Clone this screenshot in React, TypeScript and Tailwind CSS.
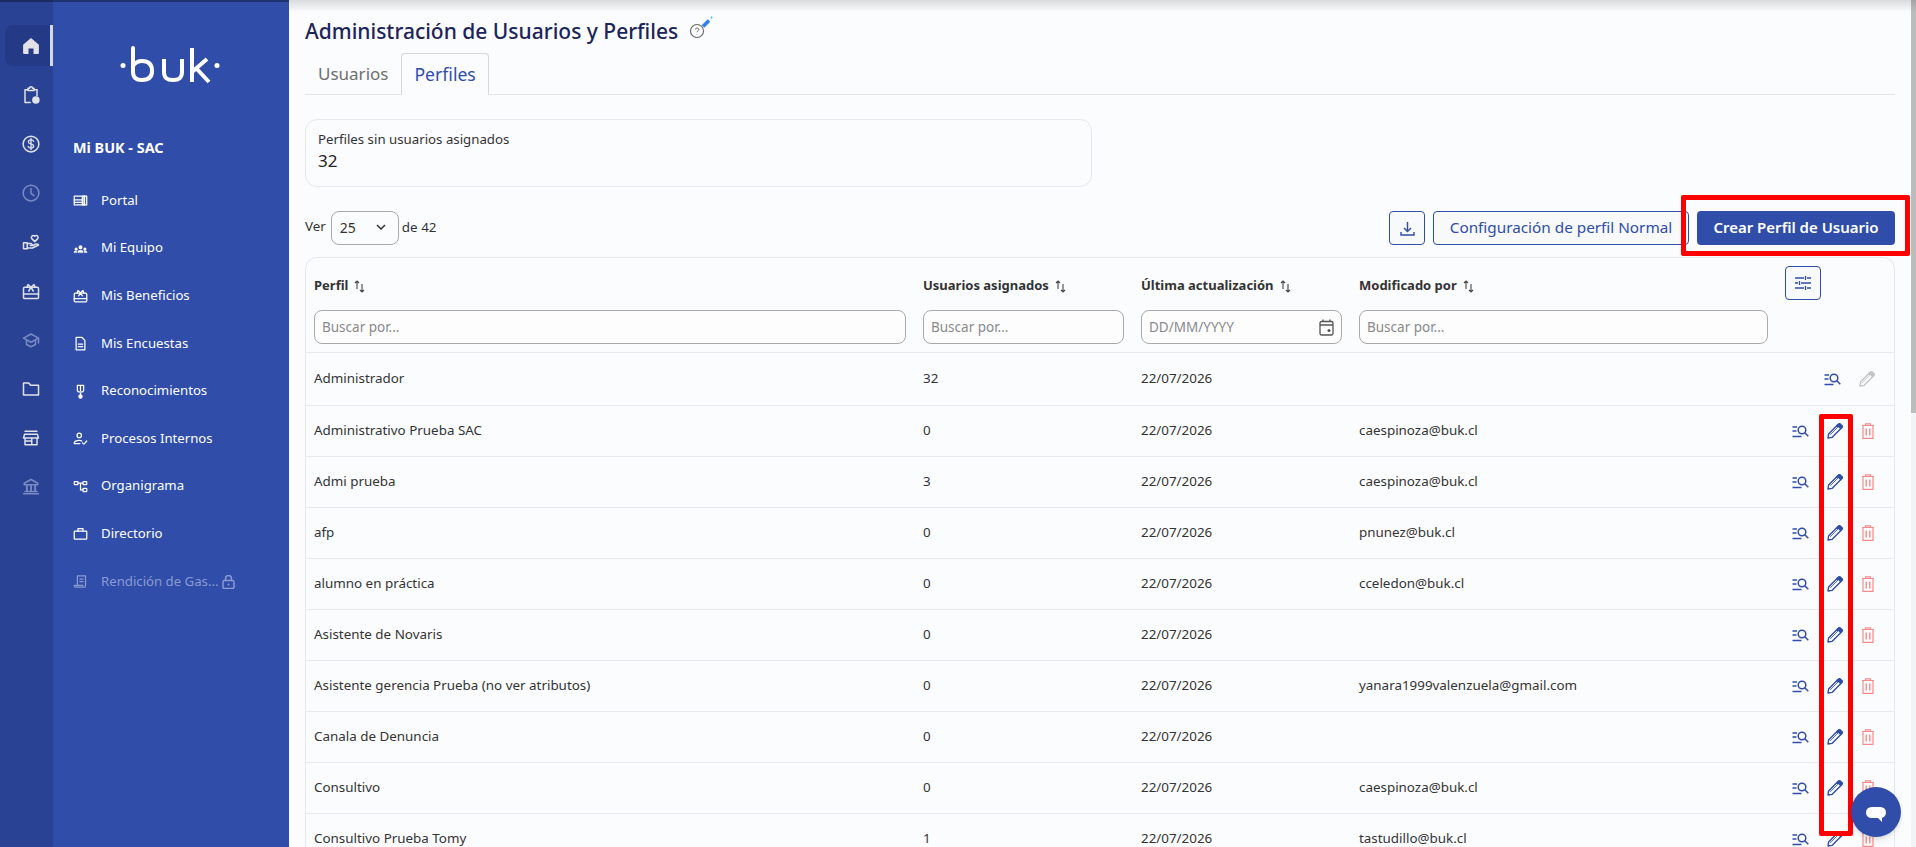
import type { ReactNode } from "react";

/* ---------------------------- Types and data ---------------------------- */

interface ProfileRow {
  name: string;
  users: number;
  updated: string;
  modifiedBy: string;
  locked?: boolean;
}

const ROWS: ProfileRow[] = [
  { name: "Administrador", users: 32, updated: "22/07/2026", modifiedBy: "", locked: true },
  { name: "Administrativo Prueba SAC", users: 0, updated: "22/07/2026", modifiedBy: "caespinoza@buk.cl" },
  { name: "Admi prueba", users: 3, updated: "22/07/2026", modifiedBy: "caespinoza@buk.cl" },
  { name: "afp", users: 0, updated: "22/07/2026", modifiedBy: "pnunez@buk.cl" },
  { name: "alumno en práctica", users: 0, updated: "22/07/2026", modifiedBy: "cceledon@buk.cl" },
  { name: "Asistente de Novaris", users: 0, updated: "22/07/2026", modifiedBy: "" },
  { name: "Asistente gerencia Prueba (no ver atributos)", users: 0, updated: "22/07/2026", modifiedBy: "yanara1999valenzuela@gmail.com" },
  { name: "Canala de Denuncia", users: 0, updated: "22/07/2026", modifiedBy: "" },
  { name: "Consultivo", users: 0, updated: "22/07/2026", modifiedBy: "caespinoza@buk.cl" },
  { name: "Consultivo Prueba Tomy", users: 1, updated: "22/07/2026", modifiedBy: "tastudillo@buk.cl" },
];

const GRID = "grid grid-cols-[592px_201px_201px_409px_1fr] gap-x-[17px] px-[8px]";

/* ------------------------------- Icons ---------------------------------- */

function Svg({ size = 20, className, children }: { size?: number; className?: string; children: ReactNode }) {
  return (
    <svg
      width={size}
      height={size}
      viewBox="0 0 24 24"
      fill="none"
      stroke="currentColor"
      strokeWidth={2}
      strokeLinecap="round"
      strokeLinejoin="round"
      className={className}
    >
      {children}
    </svg>
  );
}

const railIcons: { icon: ReactNode; dim?: boolean }[] = [
  {
    icon: (
      <path
        d="M12 2.500 3.200 9.800c-.5.4-.7.9-.7 1.500V20c0 .8.700 1.500 1.500 1.500h5V15h6v6.500h5c.8 0 1.500-.7 1.500-1.500v-8.700c0-.6-.2-1.100-.7-1.500Z"
        fill="currentColor"
        stroke="none"
      />
    ),
  },
  {
    icon: (
      <>
        <path d="M11 22H4V5h4M16 5h4v8" />
        <path d="M8 6V3h2a2 2 0 0 1 4 0h2v3Z" />
        <circle cx="18.500" cy="18.500" r="5" fill="currentColor" stroke="none" />
      </>
    ),
  },
  {
    icon: (
      <>
        <circle cx="12" cy="12" r="10.500" />
        <path d="M15.500 8.500C15 7 13.500 6.500 12 6.500c-2 0-3.500 1-3.500 2.700 0 3.600 7 1.800 7 5.500 0 1.800-1.500 2.800-3.500 2.800-1.700 0-3.200-.7-3.700-2.200M12 4.500v15" strokeWidth={1.800} />
      </>
    ),
  },
  {
    dim: true,
    icon: (
      <>
        <circle cx="12" cy="12" r="10.500" />
        <path d="M12 6v6.500l4 3" />
      </>
    ),
  },
  {
    icon: (
      <>
        <path d="M17 11.500 13 7.500c-1.700-2.200.8-5.500 4-3.200 3.200-2.300 5.700 1 4 3.200Z" />
        <path d="M2 13h5v8H2ZM7 14h5l3 2.500H11M7 20h7l8-4c-1-1.500-2.500-1.500-4-1l-3 1.500" />
      </>
    ),
  },
  {
    icon: (
      <>
        <rect x="2" y="7" width="20" height="15" rx="1.500" />
        <path d="M2 16h20M12 7 8 3.500 6.500 7M12 7l4-3.500L17.500 7M9 12l3-5 3 5" />
      </>
    ),
  },
  {
    dim: true,
    icon: (
      <>
        <path d="M12 4 2 9.500 12 15l10-5.500Z" />
        <path d="M6 12.500V18l6 3 6-3v-5.500M22 9.500V16" />
      </>
    ),
  },
  { icon: <path d="M2 20V4h7l2.500 3H22v13Z" /> },
  {
    icon: <path d="M4 3h16M3.500 7h17L22 12H2ZM4 12v9h16v-9M4 16h9v5M13 12v4" />,
  },
  {
    dim: true,
    icon: (
      <>
        <path d="M12 2 3 7v2h18V7ZM2 21h20M4 18h16" />
        <path d="M6.500 10.500v6M12 10.500v6M17.500 10.500v6" strokeWidth={2.500} />
      </>
    ),
  },
];

const menuItems: { label: string; icon: ReactNode; locked?: boolean }[] = [
  {
    label: "Portal",
    icon: (
      <>
        <rect x="2" y="5" width="20" height="14" />
        <path d="M2 11h13M2 15h13M15 5v14" />
        <path d="M18 5v14" strokeWidth={3} />
      </>
    ),
  },
  {
    label: "Mi Equipo",
    icon: (
      <>
        <circle cx="12" cy="10" r="2.200" fill="currentColor" />
        <circle cx="5" cy="13" r="1.500" fill="currentColor" />
        <circle cx="19" cy="13" r="1.500" fill="currentColor" />
        <path d="M8 18v-1c0-3 8-3 8 0v1ZM1.500 18c0-2 4-2.500 4.500-1v1ZM22.500 18c0-2-4-2.500-4.500-1v1Z" fill="currentColor" strokeWidth={1} />
      </>
    ),
  },
  {
    label: "Mis Beneficios",
    icon: (
      <>
        <rect x="2" y="8" width="20" height="14" rx="1.500" />
        <path d="M2 17h20M12 8 8 4 6.500 8M12 8l4-4 1.500 4M9 12.500 12 8l3 4.500" />
      </>
    ),
  },
  {
    label: "Mis Encuestas",
    icon: (
      <>
        <path d="M5 2h9l5 5v15H5Z" />
        <path d="M8.500 13h7M8.500 17h7" />
      </>
    ),
  },
  {
    label: "Reconocimientos",
    icon: (
      <>
        <path d="M7 2h10v8c0 4-10 4-10 0Z" />
        <path d="M12 3v8" />
        <path d="M12 15v2" />
        <circle cx="12" cy="20" r="2.500" fill="currentColor" />
      </>
    ),
  },
  {
    label: "Procesos Internos",
    icon: (
      <>
        <circle cx="10" cy="7" r="3.500" />
        <path d="M2 20v-1c0-4 9-5 12-3M2 20h9M15 19l2.500 2L22 16" />
      </>
    ),
  },
  {
    label: "Organigrama",
    icon: (
      <>
        <rect x="2" y="4" width="6" height="5" rx="1" />
        <rect x="16" y="4" width="6" height="5" rx="1" />
        <rect x="16" y="15" width="6" height="5" rx="1" />
        <path d="M8 6.500h8M12 6.500v11h4" />
      </>
    ),
  },
  {
    label: "Directorio",
    icon: (
      <>
        <rect x="2" y="8" width="20" height="13" rx="1" />
        <path d="M8 8V4h8v4" />
      </>
    ),
  },
  {
    label: "Rendición de Gas...",
    locked: true,
    icon: (
      <>
        <path d="M7 18V3h13v15c0 2-1 3-2 3H4c-1.500 0-2-1.500-2-3h14" />
        <path d="M11 8h5M11 12h5" />
      </>
    ),
  },
];

function SortIcon() {
  return (
    <svg width="11" height="13" viewBox="0 0 11 13" fill="none" stroke="#444" strokeWidth="1.100" className="ml-[6px]">
      <path d="M3 9V1M1 3l2-2 2 2" />
      <path d="M8 4v8M6 10l2 2 2-2" />
    </svg>
  );
}

function ViewIcon() {
  return (
    <svg width="17" height="14" viewBox="0 0 17 14" fill="none" stroke="#2f4da9" strokeWidth="1.300">
      <path d="M0.500 3h4.500M0.500 7h4M0.500 12.500h9" />
      <circle cx="10" cy="6" r="3.800" strokeWidth="1.500" />
      <path d="m12.800 8.800 3.500 3.500" strokeWidth="1.500" />
    </svg>
  );
}

function PencilIcon({ disabled }: { disabled?: boolean }) {
  const color = disabled ? "#c4c4c4" : "#2f4da9";
  return (
    <svg width="16" height="16" viewBox="0 0 16 16" fill="none" stroke={color} strokeWidth="1.400">
      <path d="M1 15 1.600 11 10.500 2.100l3.400 3.400L5 14.400Z" strokeLinejoin="round" />
      <path d="m10.500 2.100 1.200-1.200c.5-.5 1-.5 1.500 0l1.900 1.900c.5.500.5 1 0 1.500l-1.200 1.200Z" fill={color} />
      <path d="M3.200 11.800 11.800 3.200" strokeWidth="0.800" />
    </svg>
  );
}

function TrashIcon() {
  return (
    <svg width="14" height="16" viewBox="0 0 14 16" fill="none" stroke="#f98a8a" strokeWidth="1.200">
      <path d="M1 2.500h12M4.500 2.500V.8h5v1.700" />
      <path d="M2 2.500h10V15.300H2Z" />
      <path d="M5.200 5.500v7M8.800 5.500v7" strokeWidth="1.400" />
    </svg>
  );
}

function BukLogo() {
  return (
    <svg width="100" height="38" viewBox="0 0 100 38" fill="none" stroke="white" strokeWidth="4" strokeLinecap="round">
      <circle cx="3" cy="19.500" r="2.500" fill="white" stroke="none" />
      <circle cx="97" cy="19.500" r="2.500" fill="white" stroke="none" />
      <path d="M13 2v24c0 6 4 8 9 8s10-2 10-9-4-10-10-10c-4 0-7 2-9 5" />
      <path d="M44 13v13c0 6 3 8 9 8s9-2 9-8V13" strokeLinecap="butt" />
      <path d="M72 2v34M72 26 87 13M76 22l13 14" strokeLinecap="butt" />
    </svg>
  );
}

/* ------------------------------ Sidebars -------------------------------- */

function Rail() {
  return (
    <div className="flex w-[53px] shrink-0 flex-col items-end bg-[#2a4294] pt-[25px]">
      {railIcons.map((item, i) => (
        <div
          key={i}
          className={
            i === 0
              ? "mb-[8px] flex h-[41px] w-[48px] items-center justify-center rounded-l-lg border-r-[3px] border-[#d6d9e0] bg-[#253a86] pl-[6px] text-[#e0e2e8]"
              : `mb-[8px] flex h-[41px] w-[53px] items-center justify-center pl-[9px] ${item.dim ? "text-[#7a8bc4]" : "text-[#e0e2e8]"}`
          }
        >
          <Svg size={i === 0 ? 20 : 18}>{item.icon}</Svg>
        </div>
      ))}
    </div>
  );
}

function Sidebar() {
  return (
    <div className="flex w-[236px] shrink-0 flex-col bg-[#2f4da9] text-white">
      <div className="ml-[67px] mt-[46px]">
        <BukLogo />
      </div>
      <div className="ml-[20px] mt-[54px] text-[14.400px] font-bold leading-[20px]">Mi BUK - SAC</div>
      <nav className="mt-[19px] flex flex-col">
        {menuItems.map((item) => (
          <div
            key={item.label}
            className={`flex h-[47.600px] items-center pl-[20px] text-[13.200px] ${item.locked ? "text-[#8b9bd0]" : "text-white"}`}
          >
            <span className="flex w-[28px] shrink-0">
              <Svg size={15}>{item.icon}</Svg>
            </span>
            <span>{item.label}</span>
            {item.locked && (
              <svg width="13" height="14" viewBox="0 0 13 14" fill="none" stroke="currentColor" strokeWidth="1.500" className="ml-[3px]">
                <rect x="1" y="5.500" width="11" height="8" rx="1.500" />
                <path d="M3.500 5.500V3.500a3 3 0 0 1 6 0v2" />
                <circle cx="6.500" cy="9.500" r="1" fill="currentColor" stroke="none" />
              </svg>
            )}
          </div>
        ))}
      </nav>
    </div>
  );
}

/* -------------------------------- Table --------------------------------- */

function SearchInput({ placeholder, icon }: { placeholder: string; icon?: ReactNode }) {
  return (
    <div className="flex h-[34px] items-center justify-between rounded-lg border border-[#a9a9a9] bg-[#fdfdfe] px-[7px] text-[13.500px] text-[#8a8a8a]">
      <span>{placeholder}</span>
      {icon}
    </div>
  );
}

function ProfileTable() {
  const headers = ["Perfil", "Usuarios asignados", "Última actualización", "Modificado por"];
  return (
    <div className="rounded-t-xl border border-b-0 border-[#e6e8eb]">
      <div className={`${GRID} relative h-[95px] border-b border-[#e6e8eb]`}>
        {headers.map((h, i) => (
          <div key={h} className="flex flex-col">
            <div className="mt-[18px] flex h-[20px] items-center text-[13px] font-bold text-[#333]">
              {h}
              <SortIcon />
            </div>
            <div className="mt-[14px]">
              <SearchInput
                placeholder={i === 2 ? "DD/MM/YYYY" : "Buscar por..."}
                icon={
                  i === 2 ? (
                    <svg width="15" height="17" viewBox="0 0 15 17" fill="none" stroke="#555" strokeWidth="1.300">
                      <rect x="1" y="2.500" width="13" height="13.500" rx="1.500" />
                      <path d="M1 6h13M4 .5v2M11 .5v2" />
                      <circle cx="10" cy="11.500" r="1.500" fill="#555" stroke="none" />
                    </svg>
                  ) : undefined
                }
              />
            </div>
          </div>
        ))}
        <div className="flex justify-end pr-[68px] pt-[8px]">
          <button
            type="button"
            className="flex h-[34px] w-[36px] items-center justify-center rounded-[4px] border border-[#2f4da9] bg-[#f8f9fb] text-[#2f4da9]"
          >
            <svg width="16" height="14" viewBox="0 0 16 14" fill="none" stroke="currentColor" strokeWidth="1.300">
              <path d="M0 2h9M12 2h4M10.500 0v4M0 7h3M6 7h10M4.500 5v4M0 12h9M12 12h4M10.500 10v4" />
            </svg>
          </button>
        </div>
      </div>
      {ROWS.map((row, i) => (
        <div
          key={row.name}
          className={`${GRID} items-center border-b border-[#e6e8eb] pb-[2px] text-[13.400px] text-[#333] ${i === 0 ? "h-[53px]" : "h-[51px]"}`}
        >
          <div>{row.name}</div>
          <div>{row.users}</div>
          <div>{row.updated}</div>
          <div>{row.modifiedBy}</div>
          <div className="mt-[2px] flex items-center justify-end gap-[18px] pr-[11px]">
            <ViewIcon />
            <PencilIcon disabled={row.locked} />
            {!row.locked && <TrashIcon />}
          </div>
        </div>
      ))}
    </div>
  );
}

/* --------------------------------- App ---------------------------------- */

export default function App() {
  return (
    <div className="flex h-screen overflow-hidden bg-[#fbfcfe] font-['Noto_Sans',sans-serif]">
      <Rail />
      <Sidebar />
      <main className="relative flex-1 overflow-hidden pl-[16px] pr-[21px]">
        <div className="flex h-[53px] items-start pt-[16px]">
          <h1 className="text-[21px] font-medium leading-[30px] text-[#1b2559]">
            Administración de Usuarios y Perfiles
          </h1>
          <svg width="24" height="24" viewBox="0 0 24 24" fill="none" className="ml-[11px]">
            <circle cx="8" cy="15" r="6.500" stroke="#666" strokeWidth="1.100" />
            <path d="M6.300 13.500c.2-2 3.500-2 3.500 0 0 1.300-1.800 1.300-1.800 2.800M8 18v.4" stroke="#666" strokeWidth="1" />
            <path d="m14 10.500 6-6" stroke="#2f7fe8" strokeWidth="3.500" />
            <circle cx="22.500" cy="1.500" r="1" fill="#2fb8e8" />
          </svg>
        </div>

        <div className="flex h-[42px] border-b border-[#e3e5e8] text-[17px]">
          <div className="flex items-center px-[13px] text-[#6f6f6f]">Usuarios</div>
          <div className="flex h-[42px] items-center rounded-t-[4px] border border-[#d5d7da] border-b-[#fbfcfe] px-[12px] text-[17.600px] text-[#2f4da9]">
            Perfiles
          </div>
        </div>

        <div className="mt-[24px] h-[68px] w-[787px] rounded-xl border border-[#e6e8eb] px-[12px] pt-[9px]">
          <div className="text-[13.250px] leading-[20px] text-[#333]">Perfiles sin usuarios asignados</div>
          <div className="mt-[1px] text-[17px] leading-[22px] text-[#222]">32</div>
        </div>

        <div className="mt-[24px] flex h-[34px] items-center text-[13.400px] text-[#333]">
          <span className="pb-[3px]">Ver</span>
          <div className="ml-[5px] mr-[3px] flex h-[34px] w-[68px] items-center justify-between rounded-lg border border-[#a9a9a9] pb-[2px] pl-[8px] pr-[12px] text-[14px]">
            25
            <svg width="10" height="6" viewBox="0 0 10 6" fill="none" stroke="#333" strokeWidth="1.500">
              <path d="m1 1 4 4 4-4" />
            </svg>
          </div>
          <span className="pb-[2px]">de 42</span>
          <div className="ml-auto flex gap-[8px]">
            <button
              type="button"
              className="flex h-[34px] w-[36px] items-center justify-center rounded-[4px] border border-[#2f4da9] bg-[#f8f9fb]"
            >
              <svg width="15" height="15" viewBox="0 0 15 15" fill="none" stroke="#2f4da9" strokeWidth="1.400">
                <path d="M7.500 1v9M4 7l3.500 3.500L11 7M1 11v3h13v-3" />
              </svg>
            </button>
            <button
              type="button"
              className="h-[34px] w-[256px] rounded-[4px] border border-[#2f4da9] bg-[#f8f9fb] pb-[2px] text-[15.300px] text-[#2f4da9]"
            >
              Configuración de perfil Normal
            </button>
            <button
              type="button"
              className="h-[34px] w-[198px] rounded-[4px] bg-[#2f4da9] pb-[2px] text-[15px] font-semibold text-white"
            >
              Crear Perfil de Usuario
            </button>
          </div>
        </div>

        <div className="mt-[12px]">
          <ProfileTable />
        </div>

        {/* Red annotation boxes drawn over the page */}
        <div className="absolute left-[1392px] top-[195px] h-[61px] w-[229px] rounded-[2px] border-[5px] border-[#ff0000]" />
        <div className="absolute left-[1530px] top-[414px] h-[422px] w-[34px] rounded-[2px] border-[5px] border-[#ff0000]" />

        {/* Chat bubble */}
        <div className="absolute left-[1562px] top-[787px] flex h-[50px] w-[50px] items-center justify-center rounded-full bg-[#2f4da9] shadow-md">
          <div className="relative h-[11px] w-[20px] rounded-full bg-white">
            <div className="absolute -bottom-[4px] right-[4px] h-0 w-0 border-l-[4px] border-t-[4px] border-l-transparent border-t-white" />
          </div>
        </div>

        {/* Scrollbar */}
        <div className="absolute right-0 top-0 h-full w-[5px] bg-[#f1f3f7]">
          <div className="h-[413px] w-full bg-[#bcbcbc]" />
        </div>

        {/* Top shadow */}
        <div className="absolute left-0 right-0 top-0 h-[12px] bg-gradient-to-b from-[#00000022] to-transparent" />
      </main>
      <div className="absolute left-0 top-0 h-[2px] w-[289px] bg-[#00000055]" />
    </div>
  );
}
